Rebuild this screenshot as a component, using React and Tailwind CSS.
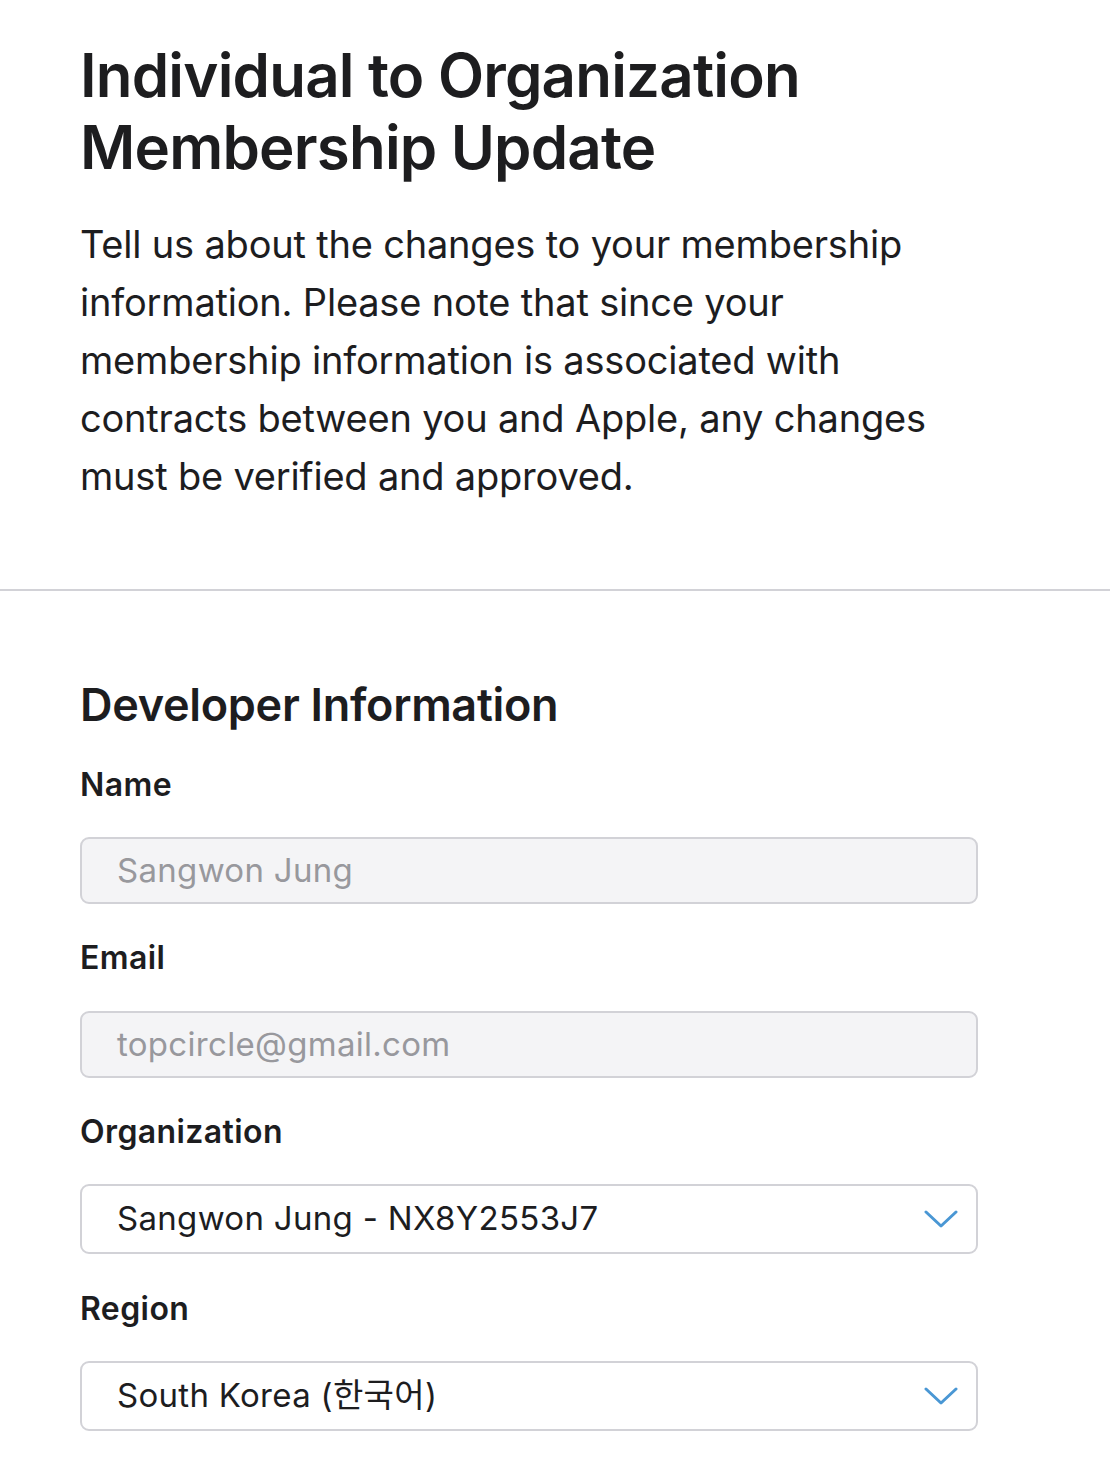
import React from "react";

const Chevron = () => (
  <svg width="34" height="20" viewBox="0 0 34 20" fill="none" className="shrink-0">
    <path d="M2 3 L17 17 L32 3" stroke="#4a97d4" strokeWidth="3" strokeLinecap="round" strokeLinejoin="round" />
  </svg>
);

function Label({ children }) {
  return (
    <div className="text-[32px] leading-[40px] font-semibold text-[#1d1d1f] tracking-[0.4px]">{children}</div>
  );
}

function DisabledInput({ value }) {
  return (
    <div className="w-[898px] h-[67px] rounded-[9px] border-2 border-[#d2d2d7] bg-[#f4f4f6] flex items-center pl-[35px] text-[33px] text-[#98989d] tracking-[0.3px]">
      {value}
    </div>
  );
}

function Select({ value }) {
  return (
    <div className="w-[898px] h-[70px] rounded-[9px] border-2 border-[#d2d2d7] bg-white flex items-center justify-between pl-[35px] pr-[18px] text-[33px] text-[#1d1d1f] tracking-[0.3px]">
      <span>{value}</span>
      <Chevron />
    </div>
  );
}

export default function App() {
  return (
    <div className="w-[1110px] min-h-[1482px] bg-white" style={{ fontFamily: 'Inter, "Noto Sans CJK KR", sans-serif' }}>
      <div className="pl-[80px] pr-[40px] pt-[39px]">
        <h1 className="text-[60px] leading-[72px] font-semibold text-[#1d1d1f] tracking-[-0.8px]">
          Individual to Organization
          <br />
          Membership Update
        </h1>
        <p className="mt-[32px] text-[38px] leading-[58px] text-[#1d1d1f] w-[880px] tracking-[-0.2px]">
          Tell us about the changes to your membership information. Please note that since your membership information is associated with contracts between you and Apple, any changes must be verified and approved.
        </p>
      </div>
      <div className="mt-[84px] h-[2px] bg-[#d2d2d7]" />
      <div className="pl-[80px] pt-[86px] pb-[50px]">
        <h2 className="text-[45px] leading-[56px] font-semibold text-[#1d1d1f] tracking-[-0.3px]">Developer Information</h2>
        <div className="mt-[32px] flex flex-col">
          <Label>Name</Label>
          <div className="mt-[32px]"><DisabledInput value="Sangwon Jung" /></div>
          <div className="mt-[34px]"><Label>Email</Label></div>
          <div className="mt-[33px]"><DisabledInput value="topcircle@gmail.com" /></div>
          <div className="mt-[34px]"><Label>Organization</Label></div>
          <div className="mt-[32px]"><Select value="Sangwon Jung - NX8Y2553J7" /></div>
          <div className="mt-[35px]"><Label>Region</Label></div>
          <div className="mt-[32px]"><Select value="South Korea (한국어)" /></div>
        </div>
      </div>
    </div>
  );
}
